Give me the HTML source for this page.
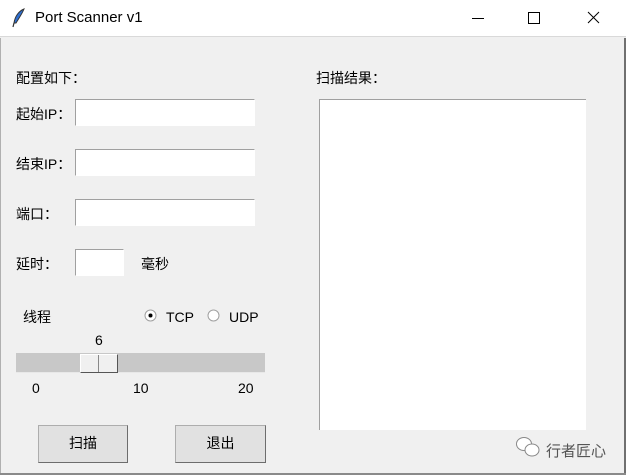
<!DOCTYPE html>
<html><head><meta charset="utf-8"><style>
*{margin:0;padding:0;box-sizing:border-box}
body{width:626px;height:475px;position:relative;overflow:hidden;background:#f0f0f0;font-family:"Liberation Sans","Noto Sans CJK SC",sans-serif;font-size:14px;color:#000}
.a{position:absolute;white-space:nowrap}
.title{left:0;top:0;width:626px;height:37px;background:#fff;border-bottom:1px solid #d9d9d9}
.ent{position:absolute;background:#fff;border-top:1px solid #a0a0a0;border-left:1px solid #a0a0a0;border-right:1px solid #fff;border-bottom:1px solid #fff}
.btn{position:absolute;background:#e1e1e1;border:1px solid #adadad;border-right-color:#6d6d6d;border-bottom-color:#6d6d6d;text-align:center;line-height:35px}
.lbl{font-size:14px;line-height:16px}
</style></head><body>
<div class="a title"></div>
<svg class="a" style="left:11px;top:8px" width="16" height="20" viewBox="0 0 16 20"><path d="M13 1 C8 3 4 8 3 15 L5 15 C8 10 11 6 13 1Z" fill="#2f6fd0" stroke="#333" stroke-width="1"/><path d="M3 15 L2 19" stroke="#333" stroke-width="1.2"/></svg>
<div class="a" style="left:35px;top:9px;font-size:15px">Port Scanner v1</div>
<svg class="a" style="left:470px;top:8px" width="140" height="22"><path d="M2 10.5H14" stroke="#000"/><rect x="58.5" y="4.5" width="11" height="11" fill="none" stroke="#000"/><path d="M118 4L129 15M129 4L118 15" stroke="#000"/></svg>
<div class="a" style="left:0;top:38px;width:1px;height:437px;background:#b0b0b0"></div>
<div class="a" style="left:624px;top:38px;width:2px;height:437px;background:#707070"></div>
<div class="a" style="left:0;top:473px;width:626px;height:2px;background:#8a8a8a"></div>

<div class="a lbl" style="left:16px;top:70px">配置如下：</div>
<div class="a lbl" style="left:16px;top:106px">起始IP：</div>
<div class="ent" style="left:75px;top:99px;width:180px;height:27px"></div>
<div class="a lbl" style="left:16px;top:156px">结束IP：</div>
<div class="ent" style="left:75px;top:149px;width:180px;height:27px"></div>
<div class="a lbl" style="left:16px;top:206px">端口：</div>
<div class="ent" style="left:75px;top:199px;width:180px;height:27px"></div>
<div class="a lbl" style="left:16px;top:256px">延时：</div>
<div class="ent" style="left:75px;top:249px;width:49px;height:27px"></div>
<div class="a lbl" style="left:141px;top:256px">毫秒</div>

<div class="a lbl" style="left:23px;top:309px">线程</div>
<svg class="a" style="left:144px;top:309px" width="80" height="14"><circle cx="6.5" cy="6.5" r="5.5" fill="#fff" stroke="#a0a0a0"/><circle cx="6.5" cy="6.5" r="2" fill="#000"/><circle cx="69.5" cy="6.5" r="5.5" fill="#fff" stroke="#a0a0a0"/></svg>
<div class="a lbl" style="left:166px;top:309px">TCP</div>
<div class="a lbl" style="left:229px;top:309px">UDP</div>
<div class="a lbl" style="left:95px;top:332px">6</div>
<div class="a" style="left:16px;top:353px;width:249px;height:20px;background:#c8c8c8;border-bottom:1px solid #e8e8e8"></div>
<div class="a" style="left:80px;top:354px;width:38px;height:19px;background:#f0f0f0;border:1px solid #fff;border-right-color:#555;border-bottom-color:#555"></div>
<div class="a" style="left:98px;top:355px;width:1px;height:17px;background:#888"></div>
<div class="a lbl" style="left:32px;top:380px">0</div>
<div class="a lbl" style="left:133px;top:380px">10</div>
<div class="a lbl" style="left:238px;top:380px">20</div>

<div class="btn" style="left:38px;top:425px;width:90px;height:38px">扫描</div>
<div class="btn" style="left:175px;top:425px;width:91px;height:38px">退出</div>

<div class="a lbl" style="left:316px;top:70px">扫描结果：</div>
<div class="ent" style="left:319px;top:99px;width:267px;height:331px;border-right:none;border-bottom:none"></div>

<svg class="a" style="left:515px;top:436px" width="26" height="22"><ellipse cx="9" cy="8" rx="7.5" ry="6.5" fill="#fff" stroke="#888"/><ellipse cx="17" cy="14" rx="7" ry="6" fill="#fff" stroke="#888"/></svg>
<div class="a" style="left:546px;top:440px;font-size:15px;color:#555">行者匠心</div>
</body></html>
